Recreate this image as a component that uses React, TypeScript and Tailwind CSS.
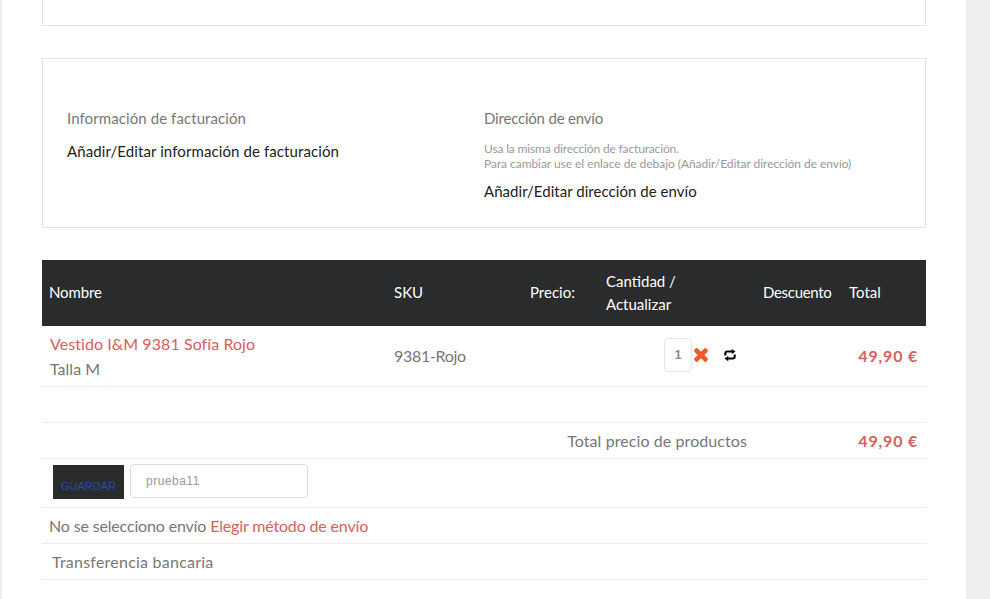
import { FaTimes } from 'react-icons/fa';

const font = "font-['Lato','Noto_Sans',sans-serif]";

function Row({ className, children }: { className: string; children: React.ReactNode }) {
    return <div className={`flex w-[885px] border-b border-[#eceeef] ${className}`}>{children}</div>;
}

// update arrows next to the quantity input
function RefreshIcon() {
    return (
        <svg viewBox="0 0 24 24" className="ml-[13px] h-[14px] w-[14px] text-black" fill="none" stroke="currentColor" strokeWidth="3.6">
            <path d="M4 13V9a3 3 0 0 1 3-3h9" />
            <path d="M15 1.5 21.5 6 15 10.5Z" fill="currentColor" stroke="none" />
            <path d="M20 11v4a3 3 0 0 1-3 3H8" />
            <path d="M9 13.5 2.5 18 9 22.5Z" fill="currentColor" stroke="none" />
        </svg>
    );
}

export default function App() {
    return (
        <div className={`flex h-[599px] w-[990px] overflow-hidden bg-[#eeeeee] ${font}`}>
            <main className="ml-[2px] h-full w-[964px] bg-white pl-[40px]">
                {/* top card, only its bottom is in view */}
                <div className="h-[26px] w-[884px] border-x border-b border-[#e3e3e3]" />

                {/* billing and shipping */}
                <section className="mt-[32px] flex h-[170px] w-[884px] border border-[#e3e3e3] pl-[24px] pt-[49px]">
                    <div className="w-[417px]">
                        <h3 className="text-[15px] leading-[20px] tracking-[0.09px] text-[#777777]">Información de facturación</h3>
                        <a className="mt-[13px] block text-[15px] leading-[20px] tracking-[0.1px] text-[#222222]">Añadir/Editar información de facturación</a>
                    </div>
                    <div>
                        <h3 className="text-[15px] leading-[20px] tracking-[-0.2px] text-[#777777]">Dirección de envío</h3>
                        <p className="mt-[13px] text-[12px] leading-[15px] tracking-[-0.05px] text-[#999999]">
                            <span className="tracking-[-0.15px]">Usa la misma dirección de facturación.</span><br />
                            Para cambiar use el enlace de debajo (Añadir/Editar dirección de envío)
                        </p>
                        <a className="mt-[10px] block text-[15px] leading-[20px] tracking-[0.04px] text-[#222222]">Añadir/Editar dirección de envío</a>
                    </div>
                </section>

                {/* cart table */}
                <div className="mt-[32px] flex h-[66px] w-[884px] items-center bg-[#292b2c] pl-[7px] text-[15px] text-white">
                    <div className="w-[345px] pb-[2px] tracking-[-0.1px]">Nombre</div>
                    <div className="w-[136px] pb-[2px]">SKU</div>
                    <div className="w-[76px] pb-[2px]">Precio:</div>
                    <div className="w-[157px] leading-[23px]">Cantidad /<br />Actualizar</div>
                    <div className="w-[86px] pb-[2px] tracking-[-0.3px]">Descuento</div>
                    <div className="pb-[2px]">Total</div>
                </div>

                <Row className="h-[61px] items-center pl-[8px] text-[#777777]">
                    <div className="w-[344px] text-[16px] leading-[25px]">
                        <a className="block tracking-[0.07px] text-[#d6605c]">Vestido I&amp;M 9381 Sofía Rojo</a>
                        <span>Talla M</span>
                    </div>
                    <div className="w-[270px] text-[16px] tracking-[-0.3px]">9381-Rojo</div>
                    <div className="flex w-[194px] items-center pb-[2px]">
                        <input
                            readOnly
                            value="1"
                            className="h-[34px] w-[28px] rounded-[4px] border border-[#e5e5e5] text-center font-['Liberation_Sans'] text-[12px] font-bold text-[#888888]"
                        />
                        <FaTimes className="text-[18px] text-[#ee5a2a]" stroke="currentColor" strokeWidth={40} />
                        <RefreshIcon />
                    </div>
                    <div className="w-[60px] text-right text-[16px] font-bold tracking-[0.8px] text-[#d6605c]">49,90 €</div>
                </Row>

                <Row className="h-[36px]"><span /></Row>

                <Row className="h-[36px] items-center text-[16px] text-[#777777]">
                    <div className="w-[705px] text-right tracking-[0.08px]">Total precio de productos</div>
                    <div className="w-[171px] text-right font-bold tracking-[0.8px] text-[#d6605c]">49,90 €</div>
                </Row>

                <Row className="h-[49px] items-start pl-[11px] pt-[5px]">
                    <button className="mt-[1px] h-[34px] w-[71px] bg-[#292b2c] pt-[8px] font-['Liberation_Sans'] text-[11px] text-[#1f4fa8]">GUARDAR</button>
                    <input
                        readOnly
                        value="prueba11"
                        className="ml-[6px] h-[34px] w-[178px] rounded-[4px] border border-[#dddddd] pl-[15px] font-['Liberation_Sans'] text-[12px] tracking-[0.5px] text-[#999999]"
                    />
                </Row>

                <Row className="h-[36px] items-center pl-[7px] text-[16px] tracking-[-0.16px] text-[#777777]">
                    <span>No se selecciono envío <a className="text-[#d6605c]">Elegir método de envío</a></span>
                </Row>

                <Row className="h-[36px] items-center pl-[10px] text-[16px] tracking-[0.23px] text-[#777777]">Transferencia bancaria</Row>
            </main>
        </div>
    );
}
